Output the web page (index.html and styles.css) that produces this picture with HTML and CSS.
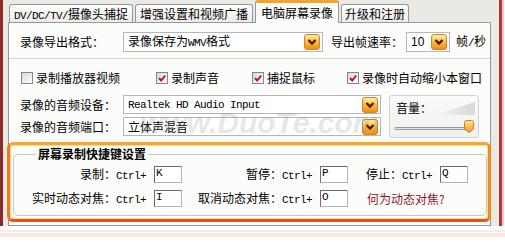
FILE: index.html
```html
<!DOCTYPE html>
<html>
<head>
    <title>电脑屏幕录像</title>
    <link rel="stylesheet" href="styles.css">
</head>
<body>
<div class="screen">
    <div class="window">
        <div class="frame">
            <div class="tabs">
                <div class="tab tab-capture"><span class="m">DV/DC/TV/</span>摄像头捕捉</div>
                <div class="tab tab-broadcast">增强设置和视频广播</div>
                <div class="tab tab-screen active">电脑屏幕录像</div>
                <div class="tab tab-reg">升级和注册</div>
            </div>
            <div class="panel">
                <div class="format-row">
                    <span class="label">录像导出格式：</span>
                    <div class="select select-format">
                        <span class="value">录像保存为<span class="m">WMV</span>格式</span>
                        <span class="drop"><svg width="16" height="16" viewBox="0 0 16 16"><defs><linearGradient id="dg1" x1="0" y1="0" x2="0" y2="1"><stop offset="0" stop-color="#fff1b8"/><stop offset="0.45" stop-color="#fbc04a"/><stop offset="1" stop-color="#f08a10"/></linearGradient></defs><rect x="0.5" y="0.5" width="15" height="15" rx="2.5" fill="url(#dg1)" stroke="#cf8420"/><polyline points="4.5,6 8,9.5 11.5,6" fill="none" stroke="#5a1800" stroke-width="2.4"/></svg></span>
                    </div>
                    <span class="label-rate">导出帧速率：</span>
                    <div class="select select-rate">
                        <span class="value num">10</span>
                        <span class="drop"><svg width="16" height="16" viewBox="0 0 16 16"><rect x="0.5" y="0.5" width="15" height="15" rx="2.5" fill="url(#dg1)" stroke="#cf8420"/><polyline points="4.5,6 8,9.5 11.5,6" fill="none" stroke="#5a1800" stroke-width="2.4"/></svg></span>
                    </div>
                    <span class="unit">帧<span class="m">/</span>秒</span>
                </div>
                <div class="rule"></div>
                <div class="checks">
                    <label class="check c1"><span class="box"></span>录制播放器视频</label>
                    <label class="check c2"><span class="box checked"><svg width="10" height="10" viewBox="0 0 10 10"><polyline points="2,5 4.2,7.5 8.2,2.5" fill="none" stroke="#c4102c" stroke-width="2"/></svg></span>录制声音</label>
                    <label class="check c3"><span class="box checked"><svg width="10" height="10" viewBox="0 0 10 10"><polyline points="2,5 4.2,7.5 8.2,2.5" fill="none" stroke="#c4102c" stroke-width="2"/></svg></span>捕捉鼠标</label>
                    <label class="check c4"><span class="box checked"><svg width="10" height="10" viewBox="0 0 10 10"><polyline points="2,5 4.2,7.5 8.2,2.5" fill="none" stroke="#c4102c" stroke-width="2"/></svg></span>录像时自动缩小本窗口</label>
                </div>
                <div class="audio">
                    <div class="audio-fields">
                        <div class="field">
                            <span class="label">录像的音频设备：</span>
                            <div class="select select-audio">
                                <span class="value m">Realtek HD Audio Input</span>
                                <span class="drop"><svg width="16" height="16" viewBox="0 0 16 16"><rect x="0.5" y="0.5" width="15" height="15" rx="2.5" fill="url(#dg1)" stroke="#cf8420"/><polyline points="4.5,6 8,9.5 11.5,6" fill="none" stroke="#5a1800" stroke-width="2.4"/></svg></span>
                            </div>
                        </div>
                        <div class="field">
                            <span class="label">录像的音频端口：</span>
                            <div class="select select-audio">
                                <span class="value">立体声混音</span>
                                <span class="drop"><svg width="16" height="16" viewBox="0 0 16 16"><rect x="0.5" y="0.5" width="15" height="15" rx="2.5" fill="url(#dg1)" stroke="#cf8420"/><polyline points="4.5,6 8,9.5 11.5,6" fill="none" stroke="#5a1800" stroke-width="2.4"/></svg></span>
                            </div>
                        </div>
                    </div>
                    <div class="volume">
                        <div class="vol-head">
                            <span>音量：</span>
                            <svg class="ramp" width="40" height="13" viewBox="0 0 40 13"><defs><linearGradient id="rg" x1="0" y1="0" x2="1" y2="0"><stop offset="0" stop-color="#f4f4f4"/><stop offset="1" stop-color="#d8d8d8"/></linearGradient></defs><polygon points="0,13 40,0 40,13" fill="url(#rg)"/></svg>
                        </div>
                        <div class="slider">
                            <span class="track"></span>
                            <span class="thumb"><svg width="10" height="13" viewBox="0 0 10 13"><defs><linearGradient id="tg" x1="0" y1="0" x2="0" y2="1"><stop offset="0" stop-color="#ffe7a0"/><stop offset="1" stop-color="#f29a18"/></linearGradient></defs><path d="M0.5 2.5 Q0.5 0.5 2.5 0.5 H7.5 Q9.5 0.5 9.5 2.5 V9 L5 12.5 L0.5 9 Z" fill="url(#tg)" stroke="#c98120"/></svg></span>
                        </div>
                    </div>
                </div>
                <div class="hotkeys">
                    <fieldset>
                        <legend>屏幕录制快捷键设置</legend>
                        <div class="hk-grid">
                            <span class="hk-label">录制：<span class="m">Ctrl+</span></span>
                            <span class="key m">K</span>
                            <span class="hk-label">暂停：<span class="m">Ctrl+</span></span>
                            <span class="key m">P</span>
                            <span class="hk-label">停止：<span class="m">Ctrl+</span></span>
                            <span class="key m">Q</span>
                            <span class="hk-label">实时动态对焦：<span class="m">Ctrl+</span></span>
                            <span class="key m">I</span>
                            <span class="hk-label">取消动态对焦：<span class="m">Ctrl+</span></span>
                            <span class="key m">O</span>
                            <a class="hk-link">何为动态对焦?</a>
                        </div>
                    </fieldset>
                </div>
            </div>
        </div>
    </div>
    <div class="reflect"></div>
    <div class="watermark">www.DuoTe.com</div>
</div>
</body>
</html>
```

FILE: styles.css
```css
:root {
    --window-bg: #ebe9e4;
    --panel-bg: #fcfcfb;
    --tab-border: #919b9c;
    --field-border: #b3b6ba;
    --text-color: #000000;
    --link-red: #8e1b1b;
}

body {
    margin: 0;
    background-color: #FFFFFF;
    color: var(--text-color);
    font-family: "Noto Sans CJK SC", "Liberation Sans", sans-serif;
    font-size: 12px;
    line-height: 16px;
}

.screen {
    position: relative;
    width: 505px;
    height: 242px;
    overflow: hidden;
}

/* half-width latin, like the bitmap font of the original */
.m {
    font-family: "Liberation Mono", monospace;
    font-size: 11px;
    letter-spacing: -0.6px;
}

.window {
    display: flex;
    width: 502px;
    height: 226px;
    box-sizing: border-box;
    border-left: 3px solid #8c2a2a;
    border-right: 3px solid #a9383a;
    box-shadow: 2px 0 0 #f0c8c8;
    background-color: var(--window-bg);
}

.frame {
    flex: 1;
    display: flex;
    flex-direction: column;
    padding: 0 8px 0 5px;
}

/* Tabs */
.tabs {
    display: flex;
    align-items: flex-end;
    gap: 2px;
    height: 22px;
    padding-left: 1px;
}

.tab {
    height: 18px;
    box-sizing: border-box;
    border: 1px solid var(--tab-border);
    border-bottom: none;
    border-radius: 3px 3px 0 0;
    background: linear-gradient(#ffffff, #ecebe6);
    text-align: center;
    line-height: 17px;
    white-space: nowrap;
}

.tab-capture { width: 124px; }
.tab-broadcast { width: 118px; }
.tab-screen { width: 84px; }
.tab-reg { width: 68px; }

.tab.active {
    position: relative;
    z-index: 1;
    height: 23px;
    margin-bottom: -1px;
    border-top: 3px solid #f2a333;
    background: var(--panel-bg);
    line-height: 19px;
}

/* Panel */
.panel {
    flex: 1;
    display: flex;
    flex-direction: column;
    border: 1px solid var(--tab-border);
    background-color: var(--panel-bg);
}

.format-row {
    display: flex;
    align-items: center;
    height: 20px;
    margin-top: 9px;
    padding-left: 11px;
}

.label {
    width: 103px;
    flex-shrink: 0;
    white-space: nowrap;
}

.select {
    display: flex;
    align-items: center;
    box-sizing: border-box;
    height: 20px;
    border: 1px solid var(--field-border);
    background-color: #FFFFFF;
    padding: 0 2px 0 4px;
}

.select .value {
    flex: 1;
    white-space: nowrap;
}

.select .num {
    font-family: "Liberation Sans", sans-serif;
    font-size: 12px;
}

.drop {
    display: flex;
    width: 16px;
    height: 16px;
}

.select-format { width: 200px; }
.select-rate { width: 44px; margin-left: 3px; }
.select-audio { width: 258px; height: 19px; }

.label-rate {
    margin-left: 8px;
}

.unit {
    margin-left: 6px;
}

.rule {
    border-top: 1px solid #d8d5ce;
    margin-top: 6px;
}

/* Checkboxes */
.checks {
    display: flex;
    align-items: center;
    height: 15px;
    margin-top: 11px;
    padding-left: 12px;
}

.check {
    display: flex;
    align-items: center;
    white-space: nowrap;
}

.c1 { width: 135px; }
.c2 { width: 96px; }
.c3 { width: 95px; }

.box {
    display: flex;
    align-items: center;
    justify-content: center;
    width: 12px;
    height: 12px;
    box-sizing: border-box;
    margin-right: 3px;
    border: 1px solid #7c8791;
    background: linear-gradient(135deg, #d9d9d3, #ffffff);
}

/* Audio */
.audio {
    display: flex;
    margin-top: 10px;
    padding-left: 11px;
}

.audio-fields {
    display: flex;
    flex-direction: column;
    gap: 3px;
}

.field {
    display: flex;
    align-items: center;
}

.volume {
    width: 90px;
    height: 43px;
    box-sizing: border-box;
    margin-left: 8px;
    padding: 4px 3px 0 6px;
    border: 1px solid #d2d2d2;
    border-radius: 3px;
    background: linear-gradient(#fafafa, #f0f0ee);
}

.vol-head {
    display: flex;
    align-items: center;
    height: 16px;
}

.ramp {
    margin-left: auto;
}

.slider {
    position: relative;
    height: 14px;
    margin: 6px 0 0 -2px;
}

.track {
    position: absolute;
    left: 0;
    top: 5px;
    width: 80px;
    height: 3px;
    border-radius: 2px;
    border: 1px solid #9a9a9a;
    box-sizing: border-box;
    background: #e4e4e4;
}

.thumb {
    position: absolute;
    left: 70px;
    top: -2px;
    display: flex;
}

/* Hotkeys */
.hotkeys {
    box-sizing: border-box;
    height: 80px;
    margin: 4px -1px 0 -2px;
    padding: 1px 1px 3px 3px;
    border: 3px solid #ee8a1e;
    border-color: #f5a82a #ee8a1e #e2561a #ec7a1c;
    border-radius: 6px;
    box-shadow: inset 0 0 0 1px #fcd98e;
}

fieldset {
    margin: 0;
    padding: 4px 0 8px 8px;
    border: 1px solid #c8c8c8;
    border-radius: 5px;
}

legend {
    margin-left: 14px;
    padding: 0 2px;
    font-weight: bold;
    line-height: 16px;
}

.hk-grid {
    display: grid;
    grid-template-columns: 124px 28px 122px 28px 76px 28px;
    grid-auto-rows: 17px;
    column-gap: 8px;
    row-gap: 7px;
    align-items: center;
}

.hk-label {
    text-align: right;
    white-space: nowrap;
}

.key {
    height: 17px;
    box-sizing: border-box;
    border: 1px solid;
    border-color: #6a6a6a #b5b5b5 #b5b5b5 #6a6a6a;
    background-color: #FFFFFF;
    padding-left: 1px;
    line-height: 13px;
}

.hk-link {
    grid-column: 5 / span 2;
    padding-left: 11px;
    color: var(--link-red);
    white-space: nowrap;
}

/* mirrored floor under the window */
.reflect {
    height: 16px;
    background: linear-gradient(#ffffff 0 4px, #efefef 4px 6px, #ffffff 6px 7px, #fde6d8 7px 11px, #ffffff 11px);
}

.watermark {
    position: absolute;
    left: 140px;
    top: 106px;
    font-family: "Liberation Sans", sans-serif;
    font-size: 30px;
    font-weight: bold;
    font-style: italic;
    line-height: 34px;
    color: rgba(130, 130, 130, 0.2);
    pointer-events: none;
}
```
